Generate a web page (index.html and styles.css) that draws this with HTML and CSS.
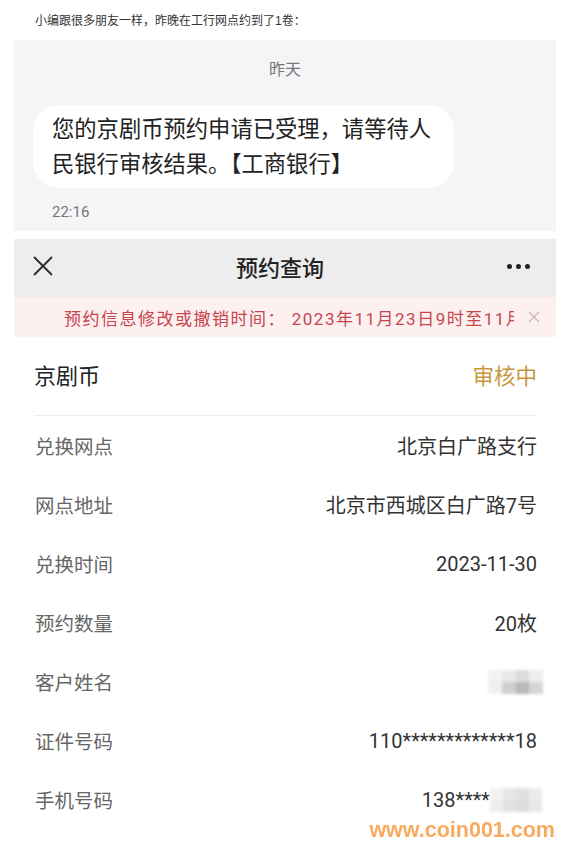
FILE: index.html
```html
<!DOCTYPE html>
<html lang="zh-CN">
<head>
    <meta charset="UTF-8">
    <meta name="viewport" content="width=device-width, initial-scale=1.0">
    <title>京剧币预约</title>
    <link rel="stylesheet" href="styles.css">
</head>
<body>
    <p class="intro">小编跟很多朋友一样，昨晚在工行网点约到了1卷：</p>

    <div class="sms">
        <div class="sms-date">昨天</div>
        <div class="bubble">您的京剧币预约申请已受理，请等待人民银行审核结果。【工商银行】</div>
        <div class="sms-time">22:16</div>
    </div>

    <div class="app">
        <div class="topbar">
            <svg class="close" width="20" height="20" viewBox="0 0 20 20">
                <path d="M1 1 L19 19 M19 1 L1 19" stroke="#2b2b2b" stroke-width="1.8" fill="none"/>
            </svg>
            <h1 class="title">预约查询</h1>
            <div class="more"><i></i><i></i><i></i></div>
        </div>

        <div class="notice">
            <div class="notice-text">预约信息修改或撤销时间： 2023年11月23日9时至11月</div>
            <svg class="notice-x" width="12" height="12" viewBox="0 0 12 12">
                <path d="M1 1 L11 11 M11 1 L1 11" stroke="#c9b6b6" stroke-width="1.3" fill="none"/>
            </svg>
        </div>

        <div class="coin-head">
            <span class="coin-name">京剧币</span>
            <span class="status">审核中</span>
        </div>

        <div class="rows">
            <div class="row"><span class="label">兑换网点</span><span class="value">北京白广路支行</span></div>
            <div class="row"><span class="label">网点地址</span><span class="value">北京市西城区白广路7号</span></div>
            <div class="row"><span class="label">兑换时间</span><span class="value">2023-11-30</span></div>
            <div class="row"><span class="label">预约数量</span><span class="value">20枚</span></div>
            <div class="row">
                <span class="label">客户姓名</span>
                <span class="mosaic name-mosaic"><i></i><i></i><i></i><i></i><i></i><i></i><i></i><i></i></span>
            </div>
            <div class="row"><span class="label">证件号码</span><span class="value">110*************18</span></div>
            <div class="row">
                <span class="label">手机号码</span>
                <span class="value">138****<span class="mosaic phone-mosaic"><i></i><i></i><i></i><i></i><i></i><i></i><i></i><i></i></span></span>
            </div>
        </div>

        <div class="watermark">www.coin001.com</div>
    </div>
</body>
</html>
```

FILE: styles.css
```css
body {
    margin: 0;
    min-height: 860px;
    background: #ffffff;
    font-family: Roboto, "Noto Sans CJK SC", sans-serif;
    color: #333;
}
.intro {
    margin: 0;
    padding: 13px 35px 11px;
    font-size: 12px;
    line-height: 16px;
    color: #333;
    font-family: "Liberation Sans", "Noto Sans CJK SC", sans-serif;
}

/* sms screenshot */
.sms {
    margin: 0 13px 0 14px;
    height: 191px;
    background: #f4f5f7;
    box-sizing: border-box;
    padding-top: 18px;
}
.sms-date {
    text-align: center;
    font-size: 16px;
    line-height: 24px;
    color: #777;
}
.bubble {
    margin: 23px 0 0 19px;
    width: 421px;
    box-sizing: border-box;
    padding: 7px 19px 6px;
    background: #fff;
    border-radius: 26px;
    font-size: 22.3px;
    line-height: 35px;
    color: #222;
}
.sms-time {
    margin: 12px 0 0 38px;
    font-size: 15px;
    line-height: 24px;
    color: #777;
}

/* app screenshot */
.app {
    margin: 8px 13px 0 14px;
    padding-bottom: 30px;
    position: relative;
}
.topbar {
    height: 54px;
    padding: 0 25px 4px 19px;
    background: #ededed;
    display: flex;
    align-items: center;
    justify-content: space-between;
}
.title {
    margin: 0;
    font-size: 22px;
    font-weight: 500;
    color: #222;
}
.more {
    display: flex;
    gap: 4px;
    width: 24px;
}
.more i {
    width: 5px;
    height: 5px;
    border-radius: 50%;
    background: #222;
}
.notice {
    height: 40px;
    background: #fdf0f0;
    display: flex;
    align-items: center;
    padding: 0 16px 0 50px;
}
.notice-text {
    flex: 1;
    overflow: hidden;
    white-space: pre;
    font-size: 17px;
    letter-spacing: 1.5px;
    color: #c8454c;
    margin-right: 14px;
}
.coin-head {
    height: 74px;
    padding-bottom: 4px;
    margin: 0 19px 0 20px;
    border-bottom: 1px solid #ececec;
    display: flex;
    align-items: center;
    justify-content: space-between;
}
.coin-name {
    font-size: 22px;
    color: #222;
}
.status {
    font-size: 21.5px;
    color: #c9953f;
}
.row {
    height: 59px;
    margin: 0 19px 0 21px;
    display: flex;
    align-items: center;
    justify-content: space-between;
}
.label {
    font-size: 19.5px;
    color: #666;
}
.value {
    font-size: 20px;
    color: #333;
    display: flex;
    align-items: center;
}
.mosaic {
    display: grid;
    grid-template-columns: repeat(4, 1fr);
    filter: blur(1.5px);
}
.mosaic i {
    height: 12px;
}
.name-mosaic {
    width: 55px;
    margin-right: -6px;
}
.name-mosaic i:nth-child(1) { background: #f2f2f2; }
.name-mosaic i:nth-child(2) { background: #e9e9e9; }
.name-mosaic i:nth-child(3) { background: #dcdcdc; }
.name-mosaic i:nth-child(4) { background: #ededed; }
.name-mosaic i:nth-child(5) { background: #f0f0f0; }
.name-mosaic i:nth-child(6) { background: #cfcfcf; }
.name-mosaic i:nth-child(7) { background: #b9b9b9; }
.name-mosaic i:nth-child(8) { background: #d6d6d6; }
.phone-mosaic {
    width: 52px;
    margin-right: -5px;
}
.phone-mosaic i:nth-child(1) { background: #f1f1f1; }
.phone-mosaic i:nth-child(2) { background: #e6e6e6; }
.phone-mosaic i:nth-child(3) { background: #e0e0e0; }
.phone-mosaic i:nth-child(4) { background: #ebebeb; }
.phone-mosaic i:nth-child(5) { background: #eeeeee; }
.phone-mosaic i:nth-child(6) { background: #e2e2e2; }
.phone-mosaic i:nth-child(7) { background: #dddddd; }
.phone-mosaic i:nth-child(8) { background: #e8e8e8; }

/* site watermark */
.watermark {
    position: absolute;
    right: 1px;
    top: 578px;
    font-family: "Liberation Sans", Arial, sans-serif;
    font-weight: bold;
    font-size: 21.5px;
    line-height: 26px;
    color: #f8a24e;
    opacity: 0.9;
}
```
